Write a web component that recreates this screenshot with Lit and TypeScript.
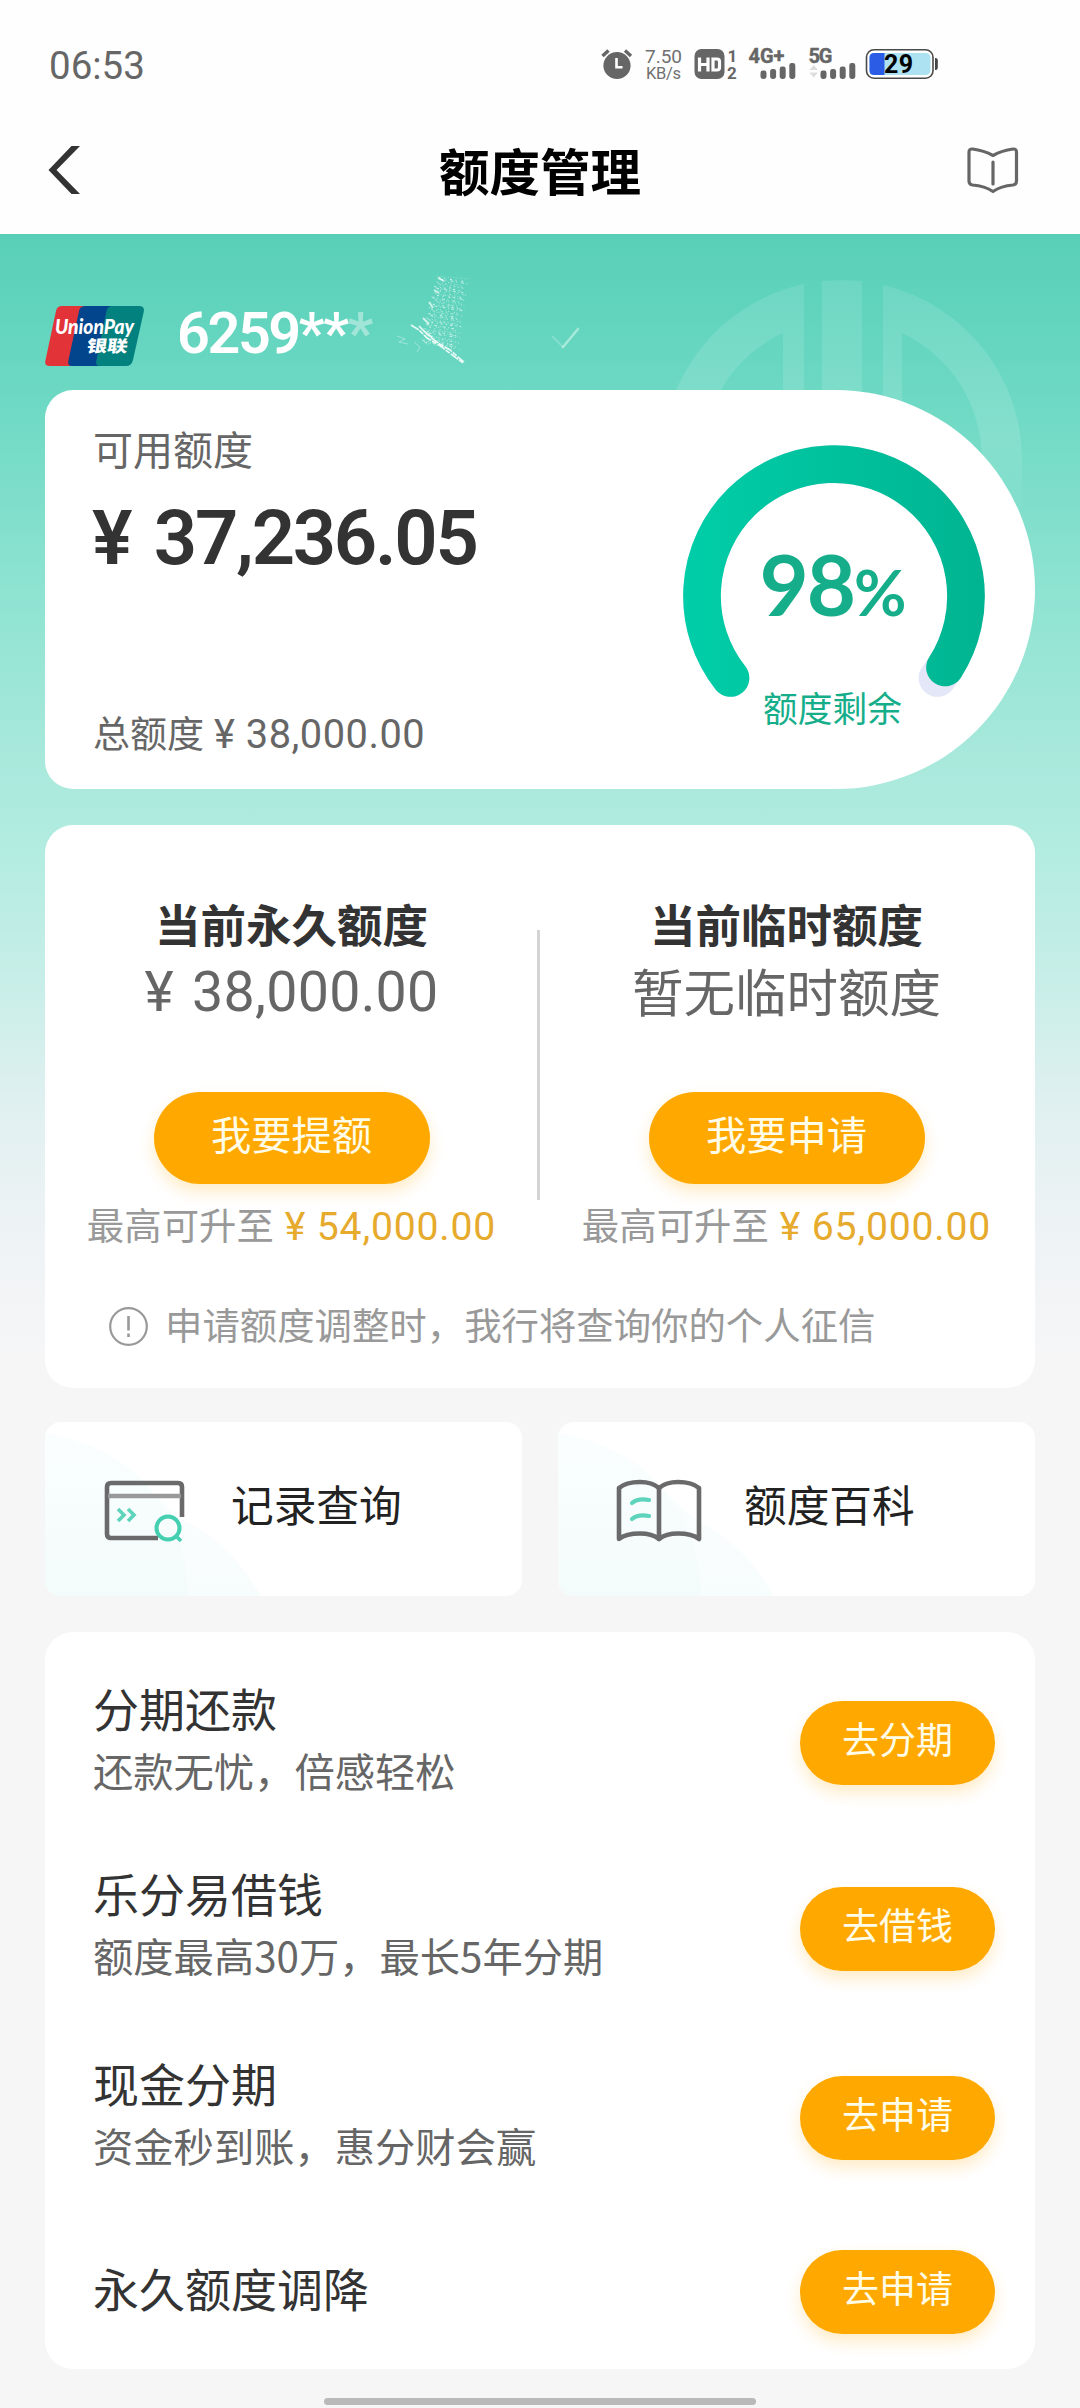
import { LitElement, html, css, svg, nothing } from "lit";
import { customElement, property } from "lit/decorators.js";

const fonts = css`"Noto Sans CJK SC", Roboto, sans-serif`;

@customElement("status-bar")
class StatusBar extends LitElement {
  static styles = css`
    :host { display: flex; align-items: center; height: 100px; padding: 28px 141px 0 49px; box-sizing: border-box; color: #666; font-family: Roboto, sans-serif; }
    .time { flex: 1; font-size: 38.5px; line-height: 44px; padding-top: 3px; }
    svg { display: block; overflow: visible; }
  `;
  render() {
    const bars = (x: number) => [0, 1, 2, 3].map((i) => svg`<rect x=${x + i * 9.6} y=${[21.5, 20, 17.5, 14][i]} width="6" height=${[8.5, 10, 12.5, 16][i]} rx="2.4"/>`);
    return html`
      <span class="time">06:53</span>
      <svg width="340" height="50" viewBox="0 -10 340 50" fill="#666" font-family="Roboto, sans-serif">
        <circle cx="18" cy="16.5" r="13.6"/>
        <path d="M3.5 7l6-5.5M32 7l-6-5.5" stroke="#666" stroke-width="3.4" fill="none"/>
        <path d="M17.500 9v9.200h6" stroke="#fff" stroke-width="2.6" fill="none"/>
        <text x="46" y="14" font-size="19" textLength="37" fill="#707070">7.50</text>
        <text x="47" y="29.600" font-size="16.5" textLength="35" fill="#707070">KB/s</text>
        <rect x="95.500" y="0" width="30" height="30" rx="7"/>
        <path d="M100.500 8.5v14M109 8.5v14M100.500 15.5h8.500" stroke="#fff" stroke-width="3.200" fill="none"/>
        <path d="M114 10h4q2.500 0 2.500 2.500v6q0 2.500-2.500 2.500h-4z" stroke="#fff" stroke-width="3.200" fill="none"/>
        <text x="128.500" y="13" font-size="17" font-weight="700">1</text>
        <text x="128" y="29.600" font-size="17" font-weight="700">2</text>
        <text x="149.500" y="14.300" font-size="20" font-weight="700" textLength="36" stroke="#666" stroke-width=".4">4G+</text>
        ${bars(161.5)}
        <text x="209.500" y="14.300" font-size="20" font-weight="700" textLength="24" stroke="#666" stroke-width=".4">5G</text>
        <path d="M210.500 21l4.200-5 4.200 5zM210.500 23.500l4.200 5 4.200-5z" fill="#ddd"/>
        ${bars(221.5)}
        <rect x="267.500" y=".8" width="66.500" height="28.400" rx="7.500" fill="#fff" stroke="#4a4a4a" stroke-width="1.600"/>
        <rect x="270.500" y="4" width="61" height="22" rx="4.500" fill="#ade2f3"/>
        <path d="M275 4h10.500v22h-10.500q-4.500 0-4.500-4.500v-13q0-4.500 4.500-4.500z" fill="#2b5ce6"/>
        <path d="M336 9h.5q2.300 0 2.300 2.300v7.400q0 2.300-2.300 2.300h-.5z" fill="#444"/>
        <text x="285" y="24" font-size="25" font-weight="700" textLength="29" fill="#000">29</text>
      </svg>
    `;
  }
}

@customElement("title-bar")
class TitleBar extends LitElement {
  static styles = css`
    :host { display: flex; align-items: center; justify-content: space-between; height: 134px; padding: 6px 61px 0 48px; box-sizing: border-box; }
    .slot { width: 60px; }
    .title { font: 700 50.5px/70px ${fonts}; color: #000; margin: -3px 0 0 13px; }
    svg { display: block; }
    .right { display: flex; justify-content: flex-end; }
  `;
  render() {
    return html`
      <span class="slot"><svg width="34" height="50" viewBox="0 0 34 50"><path d="M23.500 1h8.500L8.500 25 32 49h-8.500L.5 25z" fill="#333"/></svg></span>
      <h1 class="title">额度管理</h1>
      <span class="slot right">
        <svg width="52" height="48" viewBox="0 0 52 48" fill="none" stroke="#666" stroke-width="3.200" stroke-linejoin="round" stroke-linecap="round">
          <path d="M26 9.500Q17 4.500 5.500 3Q2 2.800 2 6V35Q2 38.500 5.500 39Q18 40 26 45.500Q34 40 46 39Q49.500 38.500 49.500 35V6Q49.500 2.800 46 3Q35 4.500 26 9.500z"/>
          <path d="M26 16v22"/>
        </svg>
      </span>
    `;
  }
}

@customElement("card-picker")
class CardPicker extends LitElement {
  static styles = css`
    :host { display: flex; align-items: flex-start; height: 156px; padding: 72px 45px 0; box-sizing: border-box; color: #fff; }
    .logo { display: block; margin-right: 33px; }
    .number { width: 196px; font: 600 57.5px/60px Roboto, sans-serif; letter-spacing: -2.4px; margin-top: -2px; white-space: nowrap; }
    .masked { letter-spacing: -1.4px; }
    .faded { opacity: .4; }
    .scribble { display: block; margin: -34px 0 0 21px; }
    .arrow { display: block; margin: 20px 0 0 77px; }
  `;
  private strands() {
    const out = [];
    for (let i = 0; i < 46; i++) {
      const y = 4 + i * 1.5;
      const left = 43 - i * 0.38 + ((i * 37) % 7);
      const right = 75 - i * 0.2 - ((i * 23) % 9);
      out.push(svg`<path d="M${left} ${y}L${right} ${y + 3 + ((i * 13) % 6)}" stroke-dasharray="${1 + ((i * 7) % 3)} ${1.5 + ((i * 5) % 3)} 1 ${2 + ((i * 11) % 4)}" opacity=${0.3 + ((i * 17) % 6) / 12}/>`);
    }
    return out;
  }
  render() {
    return html`
      <svg class="logo" width="99" height="60" viewBox="0 0 99 60">
        <path d="M17 0H42L27 60H5Q-1 60 .5 54L11 5Q12 0 17 0z" fill="#e23438"/>
        <path d="M41 0H68L55 60H27Q22 60 23.500 54L34 5Q35 0 41 0z" fill="#02458d"/>
        <path d="M68 0H94Q100 0 98.700 6L88 54Q86.500 60 81 60H55Q50 60 51.500 54L61.500 5Q62.500 0 68 0z" fill="#03817f"/>
        <text x="10" y="27.500" font-family="Lato, sans-serif" font-size="20" font-weight="900" font-style="italic" textLength="79" lengthAdjust="spacingAndGlyphs" fill="#fff">UnionPay</text>
        <text transform="translate(41 45.500) skewX(-8)" font-family="Noto Sans CJK SC, sans-serif" font-size="16.500" font-weight="900" textLength="41" lengthAdjust="spacingAndGlyphs" fill="#fff">银联</text>
      </svg>
      <span class="number">6259<span class="masked">**<span class="faded">*</span></span></span>
      <svg class="scribble" width="80" height="96" viewBox="0 0 80 96" fill="none" stroke="#fff" stroke-width="1">
        ${this.strands()}
        <path d="M44 6l6 3M40 18l5 3M35 30l4 6M29 46l6 6" stroke-width="1.800" opacity=".7"/>
        <path d="M17 53l8 5 8 8 12 7 12 9 12 9M25 54l9 9 10 8 12 7 14 12M31 60l8 6" stroke-width="1.600" stroke-dasharray="9 1 5 1.500" opacity=".85"/>
        <path d="M3 64l8 3-6 3 9 2M20 70l6 5-3 5" opacity=".35"/>
      </svg>
      <svg class="arrow" width="32" height="24" viewBox="0 0 32 24" fill="none" stroke="#d2f5ec" stroke-linecap="round">
        <path d="M2 11l10 10" stroke-width="2" opacity=".3"/><path d="M12 21L27 3" stroke-width="2.600" opacity=".6"/>
      </svg>
    `;
  }
}

@customElement("available-card")
class AvailableCard extends LitElement {
  static styles = css`
    :host { display: flex; justify-content: space-between; height: 399px; padding: 0 50px 0 48px; box-sizing: border-box; background: #fff; border-radius: 28px 199.5px 199.5px 28px; font-family: ${fonts}; color: #666; }
    .info { display: flex; flex-direction: column; padding-top: 36px; }
    .label { font-size: 40px; line-height: 44px; }
    .amount { font: 600 76px/80px Roboto, sans-serif; letter-spacing: -2.3px; word-spacing: 7px; color: #333; margin-top: 28px; margin-left: -1px; }
    .total { font-size: 37px; line-height: 44px; margin-top: 132px; white-space: nowrap; }
    .num { font: 400 39.8px/1 Roboto, sans-serif; letter-spacing: .5px; margin-left: 10px; }
    .gauge { display: grid; width: 302px; margin-top: 55px; align-self: flex-start; }
    .gauge > * { grid-area: 1 / 1; }
    .reading { display: flex; flex-direction: column; align-items: center; color: #16ae8a; }
    .percent { font: 700 85px/90px Lato, sans-serif; letter-spacing: -2px; margin: 93px 2px 0 0; }
    .percent small { font-size: 64px; letter-spacing: 0; }
    .caption { font-size: 34.7px; line-height: 40px; margin: 50px 3px 0 0; }
  `;
  render() {
    return html`
      <div class="info">
        <span class="label">可用额度</span>
        <span class="amount">¥ 37,236.05</span>
        <span class="total">总额度<span class="num">¥ 38,000.00</span></span>
      </div>
      <div class="gauge">
        <svg width="302" height="302" viewBox="0 0 302 302" fill="none" stroke-width="37.700" stroke-linecap="round">
          <defs><linearGradient id="arc" gradientUnits="userSpaceOnUse" x1="0" y1="0" x2="302" y2="0"><stop offset="0" stop-color="#00cea8"/><stop offset="1" stop-color="#00b491"/></linearGradient></defs>
          <path d="M47.500 233A132 132 0 1 1 254.500 233" stroke="#e3e7f7"/>
          <path d="M47.500 233A132 132 0 1 1 262 222.500" stroke="url(#arc)"/>
        </svg>
        <div class="reading">
          <span class="percent">98<small>%</small></span>
          <span class="caption">额度剩余</span>
        </div>
      </div>
    `;
  }
}

@customElement("limit-column")
class LimitColumn extends LitElement {
  @property() heading = "";
  @property() value = "";
  @property() action = "";
  @property() limit = "";
  @property({ type: Boolean }) money = false;
  static styles = css`
    :host { display: flex; flex-direction: column; align-items: center; width: 495px; font-family: ${fonts}; }
    .heading { font-size: 45.5px; line-height: 60px; font-weight: 700; color: #333; }
    .value { font-size: 51.5px; line-height: 70px; height: 70px; color: #666; margin-top: 2px; }
    .value.money { font: 400 55.5px/76px Roboto, sans-serif; letter-spacing: .3px; word-spacing: 4px; }
    .button { display: flex; justify-content: center; width: 276px; height: 92px; margin-top: 67px; padding-top: 13px; box-sizing: border-box; border: 0; border-radius: 46px; background: #ffa900; box-shadow: 0 8px 16px rgba(255, 169, 0, .22); color: #fffce8; font: 400 40.3px/56px ${fonts}; }
    .upto { font-size: 37.4px; line-height: 50px; color: #999; margin-top: 15px; white-space: nowrap; }
    .num { font: 400 39.2px/1 Roboto, sans-serif; letter-spacing: .8px; color: #e6aa2c; margin-left: 11px; }
  `;
  render() {
    return html`
      <span class="heading">${this.heading}</span>
      <span class="value ${this.money ? "money" : ""}">${this.value}</span>
      <button class="button">${this.action}</button>
      <span class="upto">最高可升至<span class="num">¥ ${this.limit}</span></span>
    `;
  }
}

@customElement("limits-card")
class LimitsCard extends LitElement {
  static styles = css`
    :host { display: flex; flex-direction: column; height: 563px; margin-top: 36px; background: #fff; border-radius: 28px; }
    .columns { display: flex; padding-top: 68px; height: 360px; margin-left: -1px; position: relative; }
    .divider { position: absolute; left: 493px; top: 105px; width: 3px; height: 270px; background: #d4d4d4; }
    .notice { display: flex; align-items: center; gap: 17px; padding: 46px 0 0 64px; color: #999; font: 400 37.4px/50px ${fonts}; white-space: nowrap; }
    .notice svg { display: block; margin-top: 4px; }
  `;
  render() {
    return html`
      <div class="columns">
        <limit-column heading="当前永久额度" value="¥ 38,000.00" money action="我要提额" limit="54,000.00"></limit-column>
        <limit-column heading="当前临时额度" value="暂无临时额度" action="我要申请" limit="65,000.00"></limit-column>
        <i class="divider"></i>
      </div>
      <div class="notice">
        <svg width="39" height="39" viewBox="0 0 39 39" fill="none" stroke="#999" stroke-width="2.200"><circle cx="19.500" cy="19.500" r="18.300"/><path d="M19.500 9v14.500M19.500 26.500v3.500" stroke-width="2.600"/></svg>
        <span>申请额度调整时，我行将查询你的个人征信</span>
      </div>
    `;
  }
}

@customElement("shortcut-tile")
class ShortcutTile extends LitElement {
  @property() label = "";
  @property() icon = "";
  static styles = css`
    :host { display: grid; height: 174px; border-radius: 16px; overflow: hidden; background: #fff; }
    .wash, .content { grid-area: 1 / 1; display: block; }
    .content { display: flex; align-items: center; padding-left: 58px; }
    .label { font: 400 42.7px/60px ${fonts}; color: #222; margin: -13px 0 0 41px; }
    .content svg { display: block; margin-top: 4px; }
  `;
  render() {
    const record = svg`
      <g fill="none" stroke="#6a6a6a" stroke-width="4.600">
        <path d="M55 59H8Q4 59 4 55V8Q4 4 8 4H75Q79 4 79 8V38"/>
        <path d="M5 17H78" stroke="#999"/>
        <path d="M15 30l6 6-6 6M25 30l6 6-6 6" stroke="#5dd4bb" stroke-width="3.600"/>
        <circle cx="65" cy="49" r="11.500" stroke="#45cfb1" stroke-width="4"/>
        <path d="M73 57l5 5" stroke="#45cfb1" stroke-width="3.600"/>
      </g>`;
    const book = svg`
      <g fill="none" stroke="#6a6a6a" stroke-width="4.600" stroke-linejoin="round" stroke-linecap="round">
        <path d="M43 9Q36 3 24 3Q10 3 3 9V60Q10 54.500 24 54.500Q36 54.500 43 60Q50 54.500 62 54.500Q76 54.500 83 60V9Q76 3 62 3Q50 3 43 9z"/>
        <path d="M43 9V60"/>
        <path d="M16 24Q22 19 33 21M16 40Q22 35 33 37" stroke="#5dd4bb" stroke-width="4.200"/>
      </g>`;
    return html`
      <svg class="wash" width="477" height="174" viewBox="0 0 477 174">
        <defs><linearGradient id="w" x1="0" y1="0" x2="0" y2="1"><stop offset="0" stop-color="#fafefe"/><stop offset="1" stop-color="#f4fbfb"/></linearGradient></defs>
        <path d="M0 11Q50 20 85 47Q110 75 138 98Q185 120 216 174H0z" fill="url(#w)" opacity=".7"/>
        <path d="M0 11Q50 20 85 47Q142 95 143 174H0z" fill="url(#w)"/>
      </svg>
      <div class="content">
        <svg width="87" height="64" viewBox="0 0 87 64">${this.icon === "book" ? book : record}</svg>
        <span class="label">${this.label}</span>
      </div>
    `;
  }
}

@customElement("offer-row")
class OfferRow extends LitElement {
  @property() heading = "";
  @property() detail = "";
  @property() action = "";
  static styles = css`
    :host { display: flex; align-items: center; justify-content: space-between; padding: 0 40px 0 48px; font-family: ${fonts}; }
    .text { display: flex; flex-direction: column; gap: 5px; margin-top: -12px; }
    .heading { font-size: 46px; line-height: 60px; color: #333; }
    .detail { font-size: 40.3px; line-height: 56px; color: #666; }
    .single { margin-top: -10px; }
    .button { display: flex; justify-content: center; width: 195px; height: 84px; padding: 10px 0 0; box-sizing: border-box; border: 0; border-radius: 42px; background: #ffa900; box-shadow: 0 8px 16px rgba(255, 169, 0, .22); color: #fffce8; font: 400 37px/54px ${fonts}; }
  `;
  render() {
    return html`
      <div class="text ${this.detail ? "" : "single"}">
        <span class="heading">${this.heading}</span>
        ${this.detail ? html`<span class="detail">${this.detail}</span>` : nothing}
      </div>
      <button class="button">${this.action}</button>
    `;
  }
}

@customElement("app-root")
class AppRoot extends LitElement {
  static styles = css`
    :host { display: block; width: 1080px; height: 2408px; overflow: hidden; background: #fefefe; }
    .page { height: 2174px; box-sizing: border-box; position: relative; background: linear-gradient(#5acfb8 0, #5fd3bc 60px, #6ed9c4 170px, #8be2d0 340px, #a9e9dc 530px, #b3ece1 620px, #c8eeE8 750px, #e0f0f1 870px, #eff3f5 1010px, #f6f6f7 1130px, #f6f6f7 100%); }
    .mark { position: absolute; left: 662px; top: 46px; }
    .body { padding: 0 45px; position: relative; }
    .tiles { display: grid; grid-template-columns: 1fr 1fr; gap: 36px; margin-top: 34px; }
    .offers { display: grid; grid-template-rows: 186px 185px 194px 154px; height: 737px; margin-top: 36px; padding-top: 18px; box-sizing: border-box; background: #fff; border-radius: 28px; }
    .home { width: 432px; height: 7px; border-radius: 4px; background: #b9b9b9; margin: 29px auto 0; }
  `;
  render() {
    return html`
      <status-bar></status-bar>
      <title-bar></title-bar>
      <main class="page">
        <svg class="mark" width="360" height="260" viewBox="0 0 360 260" fill="url(#fade)">
          <defs><linearGradient id="fade" gradientUnits="userSpaceOnUse" x1="0" y1="0" x2="0" y2="240"><stop offset="0" stop-color="#fff" stop-opacity=".1"/><stop offset=".65" stop-color="#fff" stop-opacity=".13"/><stop offset="1" stop-color="#fff" stop-opacity="0"/></linearGradient></defs>
          <path d="M160 1q20-1.500 40 0V240H160z"/>
          <path d="M142 4A180 180 0 0 0 0 180V240H40V180A140 140 0 0 1 121 53V240H142z"/>
          <path d="M221 5A180 180 0 0 1 360 180V240H320V180A140 140 0 0 0 240 53V240H221z"/>
        </svg>
        <card-picker></card-picker>
        <div class="body">
          <available-card></available-card>
          <limits-card></limits-card>
          <div class="tiles">
            <shortcut-tile label="记录查询" icon="record"></shortcut-tile>
            <shortcut-tile label="额度百科" icon="book"></shortcut-tile>
          </div>
          <div class="offers">
            <offer-row heading="分期还款" detail="还款无忧，倍感轻松" action="去分期"></offer-row>
            <offer-row heading="乐分易借钱" detail="额度最高30万，最长5年分期" action="去借钱"></offer-row>
            <offer-row heading="现金分期" detail="资金秒到账，惠分财会赢" action="去申请"></offer-row>
            <offer-row heading="永久额度调降" action="去申请"></offer-row>
          </div>
          <div class="home"></div>
        </div>
      </main>
    `;
  }
}
